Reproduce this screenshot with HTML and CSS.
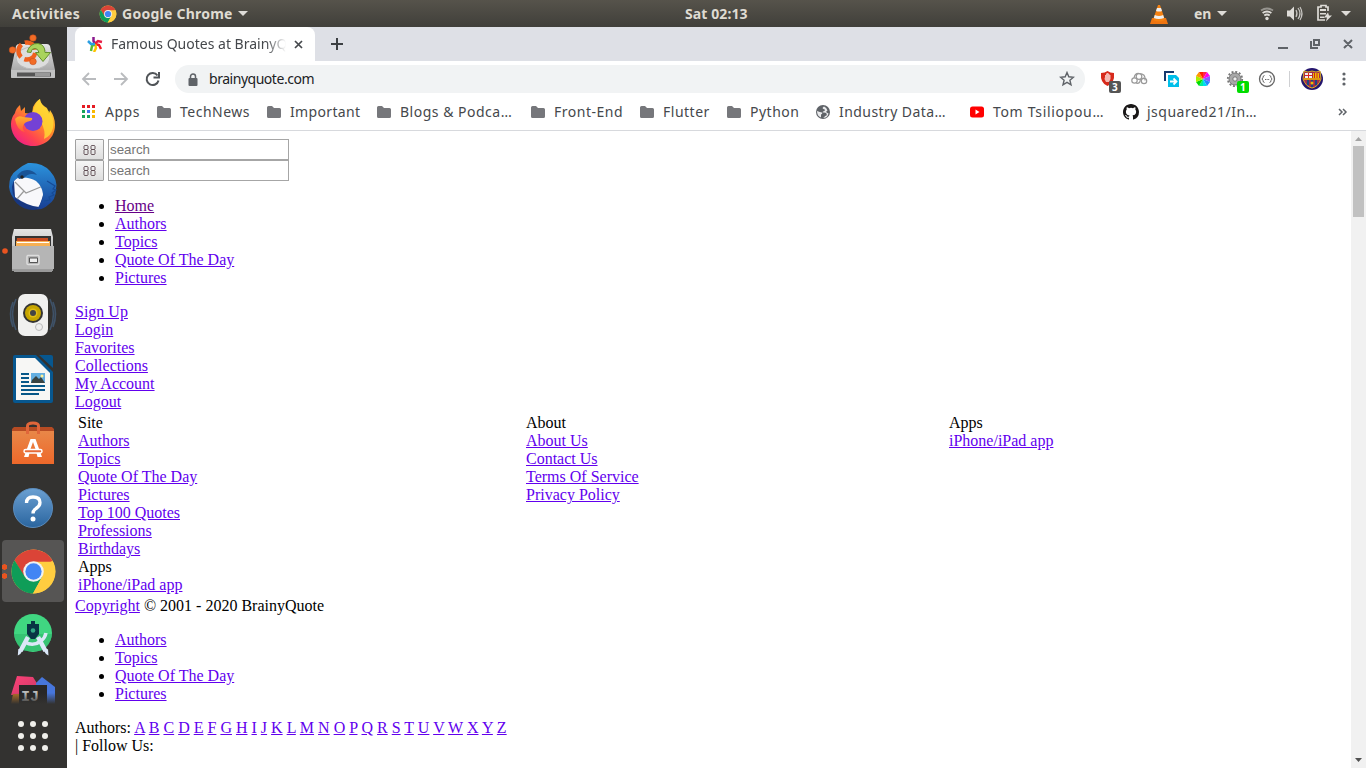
FILE: index.html
```html
<!DOCTYPE html>
<html lang="en">
<head>
<meta charset="utf-8">
<title>Famous Quotes at BrainyQuote</title>
<link rel="stylesheet" href="styles.css">
</head>
<body>
<svg width="0" height="0" class="defs">
  <defs>
    <linearGradient id="metal" x2="0" y2="1"><stop stop-color="#e4e4e4"/><stop offset="1" stop-color="#999"/></linearGradient>
    <linearGradient id="fox" x1="1" y1="0" x2=".2" y2="1"><stop stop-color="#fff04a"/><stop offset=".4" stop-color="#ff9a22"/><stop offset=".75" stop-color="#ff4450"/><stop offset="1" stop-color="#ed1c8a"/></linearGradient>
    <linearGradient id="foxhead" x2="0" y2="1"><stop stop-color="#ffb02e"/><stop offset="1" stop-color="#ff5a3c"/></linearGradient>
    <linearGradient id="bird" x2="0" y2="1"><stop stop-color="#2b93dd"/><stop offset="1" stop-color="#183f94"/></linearGradient>
    <linearGradient id="bag" x2="0" y2="1"><stop stop-color="#e8894a"/><stop offset="1" stop-color="#ee682a"/></linearGradient>
    <linearGradient id="help" x2="0" y2="1"><stop stop-color="#6ba0d2"/><stop offset="1" stop-color="#2a659f"/></linearGradient>
    <linearGradient id="fade" x2="0" y2="1"><stop stop-color="#333230" stop-opacity="0"/><stop offset="1" stop-color="#333230"/></linearGradient>
    <linearGradient id="pink" x2="1" y2="1"><stop stop-color="#ff4177"/><stop offset="1" stop-color="#c93b68"/></linearGradient>
    <symbol id="chrome" viewBox="0 0 48 48">
      <circle cx="24" cy="24" r="22.5" fill="#ffcd40"/>
      <path d="M24 24 43.5 13A22.5 22.5 0 0 0 4.6 12.6L14 29Z" fill="#db4437"/>
      <path d="M4.6 12.6A22.5 22.5 0 0 0 23.5 46.5L33 29 24 34 15 29Z" fill="#0f9d58"/>
      <path d="M24 14H43.8A22.5 22.5 0 0 1 23.5 46.5L33 29Z" fill="#ffcd40"/>
      <circle cx="24" cy="24" r="10.5" fill="#f1f1f1"/><circle cx="24" cy="24" r="8.3" fill="#4285f4"/>
    </symbol>
    <symbol id="folder" viewBox="0 0 16 14"><path d="M1 2.5Q1 1 2.5 1H6l2 2h5.500Q15 3 15 4.500v7Q15 13 13.500 13h-11Q1 13 1 11.500Z" fill="#76777b"/></symbol>
    <symbol id="glyphs" viewBox="0 0 13 10"><path d="M1.500.5h3l.5.5v3l-.5.5h-3l-.5.5v4l.5.5h3l.5-.5V5l-.5-.5h-3L1 4V1Zm7 0h3l.5.5v3l-.5.5h-3l-.5.5v4l.5.5h3l.5-.5V5l-.5-.5h-3L8 4V1Z" fill="none" stroke="#5c4a50" stroke-width=".9"/></symbol>
  </defs>
</svg>
<header class="panel">
  <span class="activities">Activities</span>
  <svg class="panel-chrome" width="18" height="18"><use href="#chrome"/></svg>
  <span class="app-name">Google Chrome</span>
  <svg class="caret" width="10" height="5"><path d="M0 0h10L5 5Z" fill="#dedcd8"/></svg>
  <span class="clock">Sat 02:13</span>
  <svg class="vlc" width="20" height="22" viewBox="0 0 20 22"><path d="M3 15h14l2 6H1Z" fill="#ee7410"/><path d="M9 2h2l5 15q-6 3-12 0Z" fill="#f58111"/><path d="m8 5-1 3q3 1 6 0l-1-3Zm-2.200 7-1 3q5 2 10.300 0l-1-3q-4 2-8.300 0Z" fill="#eee"/></svg>
  <span class="lang">en</span>
  <svg class="caret" width="10" height="5"><path d="M0 0h10L5 5Z" fill="#dedcd8"/></svg>
  <svg class="status" width="92" height="20" viewBox="1260 4 92 20">
    <g fill="none" stroke="#96948f" stroke-width="1.800"><path d="M1261 10.500q6-4 12 0"/><path d="M1262.600 13q4.400-3 8.800 0" stroke="#dedcd8"/><path d="M1264.300 15.500q2.700-2 5.400 0" stroke="#dedcd8"/></g><circle cx="1267" cy="18.500" r="1.700" fill="#dedcd8"/>
    <path d="M1287 10.500h3l4-4v14l-4-4h-3Z" fill="#dedcd8"/><path d="M1296 10q2 3.500 0 7M1298 8q4 5.500 0 11M1300 7q4 6.500 0 13" fill="none" stroke="#c9c7c3" stroke-width="1.200"/>
    <path d="M1328 11V7h-2V5.500h-5V7h-3v13h7" fill="none" stroke="#dedcd8" stroke-width="1.700"/><path d="M1320 9h6v2h-6Zm0 4h6v1.500h-6Zm0 3.500h5v1.500h-5Zm8-4-4 5h3l-1 4 6-6h-3Z" fill="#dedcd8"/>
    <path d="M1341 11h10l-5 5Z" fill="#dedcd8"/>
  </svg>
</header>
<div class="desktop">
<nav class="dock">
  <svg class="tile" viewBox="0 27 67 64"><path d="M16 46q1-2 3-2h28q2 0 3 2l5 24v7q0 1-1 1H12q-1 0-1-1v-7Z" fill="url(#metal)"/><ellipse cx="33" cy="58" rx="17" ry="11" fill="#ddd" stroke="#bbb"/><path d="M11 70h44v7q0 1-1 1H12q-1 0-1-1Z" fill="#c2c2c2"/><path d="M17 72.500h34v4H17Z" fill="#555"/><path d="M35 73h15v3H35Z" fill="#999"/><circle cx="27" cy="51" r="8.500" fill="none" stroke="#f0601d" stroke-width="4.500" stroke-dasharray="14 3.800" stroke-dashoffset="-2"/><g fill="#f26c26" stroke="#bd481b" stroke-width=".5"><circle cx="12.500" cy="50" r="3.300"/><circle cx="33" cy="38" r="3.300"/><circle cx="33" cy="61.500" r="3.300"/></g><path d="M27 52q3-9 11-8.500 7 1 7 9h5.500l-7.500 9-7.500-9H39q-1-4-4-4-4 0-4 4Z" fill="#a9d35c" stroke="#648f2e"/></svg>
  <svg class="tile" viewBox="0 91 67 64"><path d="M15 113q1-5 5-8l1 6 4-4v6l7 1 1-7q3-6 7-8 0 5 7 9l2 6 1-4q5 7 5 15c0 13-10 21-22 21s-22-9-22-22q0-6 4-11Z" fill="url(#fox)"/><path d="M32 113q4-12 8-14 0 5 7 10 8 8 6 19-2 8-9 11 2-8-3-17-2-6-9-9Z" fill="#ffdb35" opacity=".8"/><circle cx="33" cy="121.500" r="9.500" fill="#7441d5"/><path d="M15 119q3-4 8-2l9 1q1 2-2 3-6 1-7 5-1 3 2 6-8-1-10-13Z" fill="url(#foxhead)"/></svg>
  <svg class="tile" viewBox="0 155 67 64"><circle cx="33" cy="187" r="23" fill="#173781"/><path d="m14 181 5-5q16-1 24 6l2 8-6 17q-12-1-24-10Z" fill="#f8f8fb"/><path d="m15 182 11 11 17-7M24 191l-7 8" fill="none" stroke="#999" stroke-width="1.200"/><path d="M9 187q0-12 8-17 6-5 11-7 14-1 22 8 8 9 6 18 0 11-8 16-5 5-11 4 6-8 6-15-1-8-7-13-8-5-18-3-5 1-6 9 0 6 3 12-5-4-6-12Z" fill="url(#bird)"/><path d="M17 176q4-6 10-6 6 0 10 5-8-3-13 3l-5 1Z" fill="#1a5496"/><path d="m47 181 8 5-2 3 3 1-4 3 2 2-5 2 1 3-6 1" fill="none" stroke="#174b96" stroke-width="1.200"/><circle cx="22" cy="177" r="1.700" fill="#222"/></svg>
  <svg class="tile" viewBox="0 219 67 64"><circle cx="5" cy="251" r="2.800" fill="#e95420"/><path d="M14 229h37l2 8v34H12v-34Z" fill="url(#metal)"/><path d="M15 236h36v11H15Z" fill="#333"/><path d="M17 238h31v8H16Z" fill="#c94c20"/><path d="M16 241h34v6H16Z" fill="#f6b054"/><path d="M17 242h32v1H17Z" fill="#fff"/><path d="M12 246h42v23H12Z" fill="#b5b5b5"/><path d="M14 270h38v2H14Z" fill="#999"/><rect x="27" y="255.500" width="12" height="9" rx="1" fill="#aaa" stroke="#ddd" stroke-width="1.500"/><path d="M29.500 258h8v4.500h-8Z" fill="#eee" stroke="#555"/></svg>
  <svg class="tile" viewBox="0 283 67 64"><path d="M16 299q-7 15 0 31m-3-28q-5 12 0 25m37-28q7 15 0 31m3-28q5 12 0 25" fill="none" stroke="#3f5268" stroke-width="1.600"/><rect x="18" y="294" width="30" height="42" rx="7" fill="#f0f0ef"/><circle cx="33" cy="313" r="10" fill="#343434"/><circle cx="33" cy="313" r="8" fill="#c6a500"/><circle cx="33" cy="313" r="4.500" fill="#e1bd16"/><circle cx="33" cy="313" r="3" fill="#444"/><circle cx="39" cy="327" r="3.500" fill="#eee" stroke="#bbb"/></svg>
  <svg class="tile" viewBox="0 347 67 64"><path d="M39 355h12q2 0 2 2v11Z" fill="#07578f"/><path d="M15 355h21l17 17v29q0 2-2 2H15q-2 0-2-2v-44q0-2 2-2Z" fill="#07578f"/><path d="M16 358h19l15 15v27H16Z" fill="#f7f7f5"/><path d="M21 374h8m-8 4h8m-8 4h8m-8 4h24m-24 4h24m-24 4h18" stroke="#075889" stroke-width="2"/><path d="M31 373h14v10H31Z" fill="#64afe1"/><path d="m31 383 1-3 4-4 3 3 2-2 4 6Z" fill="#394341"/><circle cx="42" cy="376" r="1.500" fill="#fff194"/></svg>
  <svg class="tile" viewBox="0 411 67 64"><path d="M12 429h42v35H12Z" fill="url(#bag)"/><path d="m12 429 2-2h38l2 2v2H12Z" fill="#b64b23"/><path d="M27.500 434v-8q0-3 5.500-3t5.500 3v8" fill="none" stroke="#e0663a" stroke-width="3"/><path d="M24 457h4.500l1-4h7l1 4H42l-6.500-18h-5Zm6.500-8 2.500-7 2.500 7Z" fill="#fff"/><rect x="24" y="449.500" width="18" height="3.500" rx="1.700" fill="#e66a37" stroke="#fff" stroke-width="1.500"/></svg>
  <svg class="tile" viewBox="0 475 67 64"><circle cx="33" cy="508" r="19.500" fill="url(#help)" stroke="#5b8cbd"/><path d="M26.500 503q0-6 6.500-6 7 0 7 5.500 0 3.500-4 6-3 2-3 5" fill="none" stroke="white" stroke-width="3.300"/><circle cx="33" cy="519" r="2.500" fill="white"/></svg>
  <div class="tile active-tile"><span class="running"></span><svg class="dock-chrome" width="47" height="47"><use href="#chrome"/></svg></div>
  <svg class="tile" viewBox="0 603 67 64"><circle cx="33" cy="633" r="19" fill="#40d681"/><path d="M14.500 634h37.300q-1 12-11 17H24q-9-6-9.500-17Z" fill="#2fb56b" opacity=".6"/><path d="m28 637-7.500 14m17.500-14 7.500 14" stroke="#dbe7f8" stroke-width="4.500"/><path d="m18.300 649 4 2-2 3-2.500 1.500Zm29.700 0-4 2 2 3 2.500 1.500Z" fill="#dbe7f8"/><path d="M25 642q8 5 16-1 4-3 5-8" fill="none" stroke="#dbe7f8" stroke-width="3.500"/><path d="M31 624v-3h4v3h4v10l-4 5h-4l-4-5v-10Z" fill="#083544"/><circle cx="33" cy="630.500" r="2.300" fill="#30a985"/></svg>
  <svg class="tile last-tile" viewBox="0 667 67 37"><path d="m17 676 16 1 5 8-10 10H11Z" fill="url(#pink)"/><path d="m36 683 6-6 13 10v17H37Z" fill="#4776dc"/><path d="M13 694h10v10H11Z" fill="#b07127"/><path d="M19 685h28v19H19Z" fill="#282727"/><text x="21" y="701" class="ij">IJ</text><path d="M8 693h50v11H8Z" fill="url(#fade)"/></svg>
  <svg class="tile" viewBox="0 704 67 64" fill="#efeeea"><circle cx="21" cy="724" r="3"/><circle cx="33" cy="724" r="3"/><circle cx="45" cy="724" r="3"/><circle cx="21" cy="736" r="3"/><circle cx="33" cy="736" r="3"/><circle cx="45" cy="736" r="3"/><circle cx="21" cy="748" r="3"/><circle cx="33" cy="748" r="3"/><circle cx="45" cy="748" r="3"/></svg>
</nav>
<main class="window">
  <div class="tabs">
    <div class="tab">
      <svg width="16" height="16" viewBox="0 0 16 16"><g fill="none" stroke-width="2.500"><path d="M8 8 6.500 5V1" stroke="#8b198e"/><path d="m8 7.500 3-2.500 4 1" stroke="#e81e46"/><path d="m8 8 4 1 2 4" stroke="#f51825"/><path d="m8 8 1 4-2 4" stroke="#ffc300"/><path d="m8 8-3 2-1 5" stroke="#56bc35"/><path d="M8 8H4L1 5" stroke="#2b9ee2"/></g></svg>
      <span class="tab-title">Famous Quotes at BrainyQuote</span>
      <svg width="9" height="9"><path d="m1 1 7 7m0-7-7 7" stroke="#45484c" stroke-width="1.700"/></svg>
    </div>
    <svg class="new-tab" width="12" height="12"><path d="M6 0v12M0 6h12" stroke="#3c4043" stroke-width="2"/></svg>
    <svg class="window-controls" width="78" height="20" viewBox="1276 34 78 20" fill="none" stroke="#5f6368" stroke-width="2"><path d="M1278 48h10M1311 41v7h7M1314 40h5v5h-5Zm30 0 8 8m0-8-8 8"/></svg>
  </div>
  <div class="toolbar">
    <svg width="80" height="18" viewBox="81 70 80 18" fill="none" stroke-width="1.800"><path d="M96 79H83m6-6-6 6 6 6M114 79h13m-6-6 6 6-6 6" stroke="#b9bbbe"/><path d="M157.500 75.500a6 6 0 1 0 1 5M159 72v5.500h-5.500" stroke="#505458" stroke-width="2"/></svg>
    <div class="address"><svg width="10" height="13"><path d="M2.500 6V3.500a2.500 2.500 0 0 1 5 0V6" fill="none" stroke="#5f6368" stroke-width="1.500"/><rect y="5" x=".5" width="9" height="8" rx="1" fill="#5f6368"/></svg><span class="url">brainyquote.com</span><svg class="star" width="16" height="16"><path d="m8 1.500 1.800 4.300 4.700.4-3.600 3 1.100 4.600L8 11.400l-4 2.400 1.100-4.600-3.600-3 4.700-.4Z" fill="none" stroke="#5f6368" stroke-width="1.400"/></svg></div>
    <svg class="extensions" width="258" height="32" viewBox="1096 63 258 32">
      <path d="M1101 73q4 0 6.500-2 2.500 2 6.500 2 1 10-6.500 13-7.500-3-6.500-13Z" fill="#d7291b"/><path d="M1105 77v-2h1v-1.500h1V73h1.500v1h1v1h1v4l-1.500 3h-3l-1.500-3Z" fill="#f4b9b3"/><rect x="1109" y="81" width="12" height="12" rx="2" fill="#555"/><text x="1112" y="91" class="badge">3</text>
      <g fill="none" stroke="#999" stroke-width="1.200"><circle cx="1134.500" cy="80.500" r="2.700"/><circle cx="1144" cy="81" r="2.700"/><circle cx="1139" cy="76.500" r="2.800"/><path d="M1134 78q1-5 5-4.500 7 0 6 7M1136 83q3 1 4-1.500 0-3 4-3.500"/></g>
      <path d="M1165 81v-9h9" fill="none" stroke="#17386d" stroke-width="2"/><path d="M1168 75h8l3 3v9h-11Z" fill="#00bfea"/><path d="M1170 81.500h6m-2.500-3 3 3-3 3" fill="none" stroke="#fff" stroke-width="1.800"/>
      <path d="M1203 79v-7h4Z" fill="#ff244d"/><path d="M1203 79 1207 72l3 4Z" fill="#f0e"/><path d="m1203 79 7-3v6Z" fill="#815eff"/><path d="m1203 79 7 3-3 4Z" fill="#28f"/><path d="M1203 79l4 7h-4Z" fill="#0de"/><path d="M1203 79v7h-4Z" fill="#0e9"/><path d="m1203 79-4 7-3-4Z" fill="#0d0"/><path d="m1203 79-7 3v-6Z" fill="#ae0"/><path d="m1203 79-7-3 3-4Z" fill="#f90"/><path d="m1203 79-4-7h4Z" fill="#f20"/>
      <circle cx="1235" cy="79" r="6" fill="#a8a8a8" stroke="#777" stroke-width="1"/><circle cx="1235" cy="79" r="7.200" fill="none" stroke="#777" stroke-width="1.800" stroke-dasharray="2 1.770"/><circle cx="1235" cy="79" r="2.200" fill="#eee" stroke="#777"/><rect x="1237" y="81" width="12" height="12" rx="2" fill="#00dc00"/><text x="1240" y="91" class="badge">1</text>
      <circle cx="1267" cy="79" r="7.500" fill="#fff" stroke="#666" stroke-width="1.300"/><path d="M1264.500 75.500q-1.500 0-1.500 2l-1 1.500 1 1.500q0 2 1.500 2m5-7q1.500 0 1.500 2l1 1.500-1 1.500q0 2-1.500 2" fill="none" stroke="#666"/><path d="M1265 79.500h1m.6 0h1m.6 0h1" stroke="#666"/><path d="M1289.500 71v16" stroke="#cfd0d3"/>
      <circle cx="1312" cy="79" r="11" fill="#24156d"/><path d="m1304 71 4 1 4-1 4 1 4-1 1 8q-3 8-9 9-6-1-9-9Z" fill="#a42b48" stroke="#d5ae27"/><path d="M1305 73h7v5h-7Z" fill="#eee"/><path d="M1308.500 73v5m-3.500-2.500h7" stroke="#d22"/><path d="M1313 73h6v5h-6Z" fill="#edbb00"/><path d="M1314.500 73v5m2.500-5v5" stroke="#c22"/><path d="M1304 79h16" stroke="#edbb00" stroke-width="1.500"/><path d="M1308 80v5m4-5v7m4-7v5" stroke="#204382" stroke-width="2"/><circle cx="1312" cy="83" r="1.500" fill="#edbb00"/>
      <g fill="#5f6368"><circle cx="1344" cy="74" r="1.600"/><circle cx="1344" cy="79" r="1.600"/><circle cx="1344" cy="84" r="1.600"/></g>
    </svg>
  </div>
  <div class="bookmarks">
    <div class="bookmark apps"><svg width="16" height="16"><path d="M1 1h3v3H1m5-3h3v3H6m5-3h3v3h-3" fill="#e51c23"/><path d="M1 6h3v3H1m0 2h3v3H1m5-3h3v3H6" fill="#16a45a"/><path d="M6 6h3v3H6" fill="#4374f1"/><path d="M11 6h3v3h-3m0 2h3v3h-3" fill="#f8b800"/></svg><span>Apps</span></div>
    <div class="bookmark tech"><svg width="16" height="14"><use href="#folder"/></svg><span>TechNews</span></div>
    <div class="bookmark important"><svg width="16" height="14"><use href="#folder"/></svg><span>Important</span></div>
    <div class="bookmark blogs"><svg width="16" height="14"><use href="#folder"/></svg><span>Blogs &amp; Podca…</span></div>
    <div class="bookmark front"><svg width="16" height="14"><use href="#folder"/></svg><span>Front-End</span></div>
    <div class="bookmark flutter"><svg width="16" height="14"><use href="#folder"/></svg><span>Flutter</span></div>
    <div class="bookmark python"><svg width="16" height="14"><use href="#folder"/></svg><span>Python</span></div>
    <div class="bookmark industry"><svg width="16" height="16"><circle cx="8" cy="8" r="7" fill="#5f6368"/><path d="M9 2.500q-2.500 1.500-.5 2.500 2 0 1 2-2 0-2 1.500 3-.5 4 1 1 2-1.500 2.500-.5 1.500-2 2 4.500 0 5.500-4.500l-2-1q-1-1 1-2-1-3-3.500-4ZM2 7q3 1 5 1.500 1 1.500-1 2v3Q2 12 2 7Z" fill="#e9eaec"/></svg><span>Industry Data…</span></div>
    <div class="bookmark youtube"><svg width="16" height="14"><rect x="1" y="1.500" width="14" height="11" rx="2.500" fill="red"/><path d="m6.500 4.500 4 2.500-4 2.500Z" fill="#fff"/></svg><span>Tom Tsiliopou…</span></div>
    <div class="bookmark github"><svg width="16" height="16"><path fill="#191717" fill-rule="evenodd" d="M8 0C3.580 0 0 3.580 0 8c0 3.540 2.290 6.530 5.470 7.590.4.070.55-.17.55-.38 0-.19-.01-.82-.01-1.490-2.010.37-2.530-.49-2.690-.94-.09-.23-.48-.94-.82-1.130-.28-.15-.68-.52-.01-.53.63-.01 1.080.58 1.230.82.72 1.210 1.870.87 2.330.66.07-.52.28-.87.51-1.070-1.780-.2-3.640-.89-3.640-3.950 0-.87.31-1.590.82-2.150-.08-.2-.36-1.020.08-2.120 0 0 .67-.21 2.200.82a7.500 7.500 0 0 1 4 0c1.530-1.040 2.200-.82 2.200-.82.44 1.100.16 1.920.08 2.120.51.56.82 1.270.82 2.150 0 3.070-1.870 3.750-3.650 3.950.29.25.54.73.54 1.480 0 1.070-.01 1.930-.01 2.200 0 .21.15.46.55.38A8 8 0 0 0 16 8c0-4.420-3.580-8-8-8Z"/></svg><span>jsquared21/In…</span></div>
    <svg class="overflow" width="10" height="8"><path d="m1 1 3 3-3 3m4-6 3 3-3 3" fill="none" stroke="#5f6368" stroke-width="1.500"/></svg>
  </div>
  <div class="viewport">
    <div class="page">
      <div class="search"><button><svg width="13" height="10"><use href="#glyphs"/></svg></button><input placeholder="search"></div>
      <div class="search"><button><svg width="13" height="10"><use href="#glyphs"/></svg></button><input placeholder="search"></div>
      <ul><li><a class="visited" href="#">Home</a></li><li><a href="#">Authors</a></li><li><a href="#">Topics</a></li><li><a href="#">Quote Of The Day</a></li><li><a href="#">Pictures</a></li></ul>
      <div><a href="#">Sign Up</a></div><div><a href="#">Login</a></div><div><a href="#">Favorites</a></div><div><a href="#">Collections</a></div><div><a href="#">My Account</a></div><div><a href="#">Logout</a></div>
      <div class="columns">
        <div>Site<br><a href="#">Authors</a><br><a href="#">Topics</a><br><a href="#">Quote Of The Day</a><br><a href="#">Pictures</a><br><a href="#">Top 100 Quotes</a><br><a href="#">Professions</a><br><a href="#">Birthdays</a><br>Apps<br><a href="#">iPhone/iPad app</a></div>
        <div>About<br><a href="#">About Us</a><br><a href="#">Contact Us</a><br><a href="#">Terms Of Service</a><br><a href="#">Privacy Policy</a></div>
        <div>Apps<br><a href="#">iPhone/iPad app</a></div>
      </div>
      <div><a href="#">Copyright</a> © 2001 - 2020 BrainyQuote</div>
      <ul><li><a href="#">Authors</a></li><li><a href="#">Topics</a></li><li><a href="#">Quote Of The Day</a></li><li><a href="#">Pictures</a></li></ul>
      <div>Authors: <a href="#">A</a> <a href="#">B</a> <a href="#">C</a> <a href="#">D</a> <a href="#">E</a> <a href="#">F</a> <a href="#">G</a> <a href="#">H</a> <a href="#">I</a> <a href="#">J</a> <a href="#">K</a> <a href="#">L</a> <a href="#">M</a> <a href="#">N</a> <a href="#">O</a> <a href="#">P</a> <a href="#">Q</a> <a href="#">R</a> <a href="#">S</a> <a href="#">T</a> <a href="#">U</a> <a href="#">V</a> <a href="#">W</a> <a href="#">X</a> <a href="#">Y</a> <a href="#">Z</a></div>
      <div>| Follow Us:</div>
    </div>
    <div class="scrollbar"><svg width="7" height="4"><path d="M0 4h7L3.500 0Z" fill="#a3a3a3"/></svg><div class="thumb"></div><svg class="down" width="7" height="4"><path d="M0 0h7L3.500 4Z" fill="#505050"/></svg></div>
  </div>
</main>
</div>
</body>
</html>
```
FILE: styles.css
```css
* { box-sizing: border-box; }
body { margin: 0; width: 1366px; height: 768px; overflow: hidden; display: flex; flex-direction: column; font-family: "Noto Sans", sans-serif; }
svg { display: block; flex: none; }
.defs { position: absolute; }
.panel { height: 27px; flex: none; display: flex; align-items: center; background: linear-gradient(#56534b, #403f3a); color: #dfdbd2; font-size: 14px; font-weight: 700; white-space: nowrap; padding-left: 12px; }
.activities { width: 87px; letter-spacing: .3px; }
.panel-chrome { margin-right: 5px; }
.app-name { width: 116px; letter-spacing: .25px; }
.clock { width: 464px; margin-left: 437px; letter-spacing: .1px; }
.vlc { margin-right: 25px; }
.lang { width: 23px; }
.status { margin-left: 33px; }
.desktop { flex: 1; display: flex; min-height: 0; }
.dock { width: 67px; flex: none; background: #333230; display: flex; flex-direction: column; }
.tile { width: 67px; height: 64px; flex: none; }
.last-tile { height: 37px; }
.ij { font: 700 15px "Liberation Mono", monospace; fill: #bbb; }
.active-tile { width: 62px; height: 62px; margin: 1px 3px 1px 2px; border-radius: 4px; background: #565554; display: flex; align-items: center; }
.running { width: 8px; height: 15px; background: radial-gradient(circle at 2.500px 3px, #e95420 2.500px, transparent 3px), radial-gradient(circle at 2.500px 12px, #e95420 2.500px, transparent 3px); }
.window { flex: 1; min-width: 0; display: flex; flex-direction: column; background: #fff; }
.tabs { height: 34px; flex: none; display: flex; align-items: center; background: #dee0e6; padding-left: 8px; }
.tab { width: 240px; height: 34px; border-radius: 8px 8px 0 0; background: #fff; display: flex; align-items: center; padding-left: 12px; }
.tab-title { width: 178px; margin: -2px 5px 0 8px; padding-right: 2px; overflow: hidden; white-space: nowrap; font-size: 14px; color: #45484c; mask-image: linear-gradient(to right, #000 155px, transparent 175px); }
.new-tab { margin-left: 16px; }
.window-controls { margin: 0 12px 0 auto; }
.toolbar { height: 36px; flex: none; display: flex; align-items: center; padding-left: 14px; }
.address { width: 910px; height: 28px; border-radius: 14px; background: #f1f3f4; margin-left: 14px; display: flex; align-items: center; padding: 0 10px 0 13px; }
.url { margin: -2px 0 0 11px; color: #202124; font-size: 14px; letter-spacing: -.47px; }
.star { margin-left: auto; }
.extensions { margin-left: 11px; }
.badge { font: 700 10px "Noto Sans", sans-serif; fill: white; }
.bookmarks { height: 34px; flex: none; border-bottom: 1px solid #d7d9dd; display: flex; align-items: center; padding-left: 14px; padding-bottom: 4px; color: #45484c; font-size: 14px; line-height: 20px; white-space: nowrap; }
.bookmark { flex: none; display: flex; align-items: center; gap: 8px; letter-spacing: .5px; }
.apps { width: 75px; }
.tech { width: 110px; }
.important { width: 110px; letter-spacing: .35px; }
.blogs { width: 154px; }
.front { width: 109px; }
.flutter { width: 87px; }
.python { width: 89px; }
.industry { width: 154px; letter-spacing: .43px; }
.youtube { width: 154px; letter-spacing: .67px; }
.github { width: 140px; }
.overflow { margin-left: 75px; }
.viewport { flex: 1; min-height: 0; display: flex; justify-content: space-between; }
.page { width: 1284px; padding: 8px; font: 16px/18px "Liberation Serif", serif; color: #000; }
.page a { color: #6200ee; text-decoration: underline; }
.page a.visited { color: #660088; }
.search { height: 21px; display: flex; gap: 4px; }
.search button { width: 29px; height: 21px; border: 1px solid #a0a0a0; border-radius: 1px; background: linear-gradient(#f6f6f6, #dedede); padding: 0; display: grid; place-items: center; }
.search input { width: 181px; height: 21px; margin: 0; border: 1px solid #a6a6a6; padding: 1px; font: 13.333px "Liberation Sans", sans-serif; }
.search input::placeholder { color: #757575; }
.page ul { margin: 16px 0; padding-left: 40px; }
.columns { display: grid; grid-template-columns: 448px 423px 1fr; padding: 3px; }
.scrollbar { width: 15px; background: #f1f1f1; display: flex; flex-direction: column; align-items: center; padding: 6px 0 6px; }
.thumb { width: 11px; height: 71px; background: #c1c1c1; margin-top: 5px; }
.down { margin-top: auto; }
```
